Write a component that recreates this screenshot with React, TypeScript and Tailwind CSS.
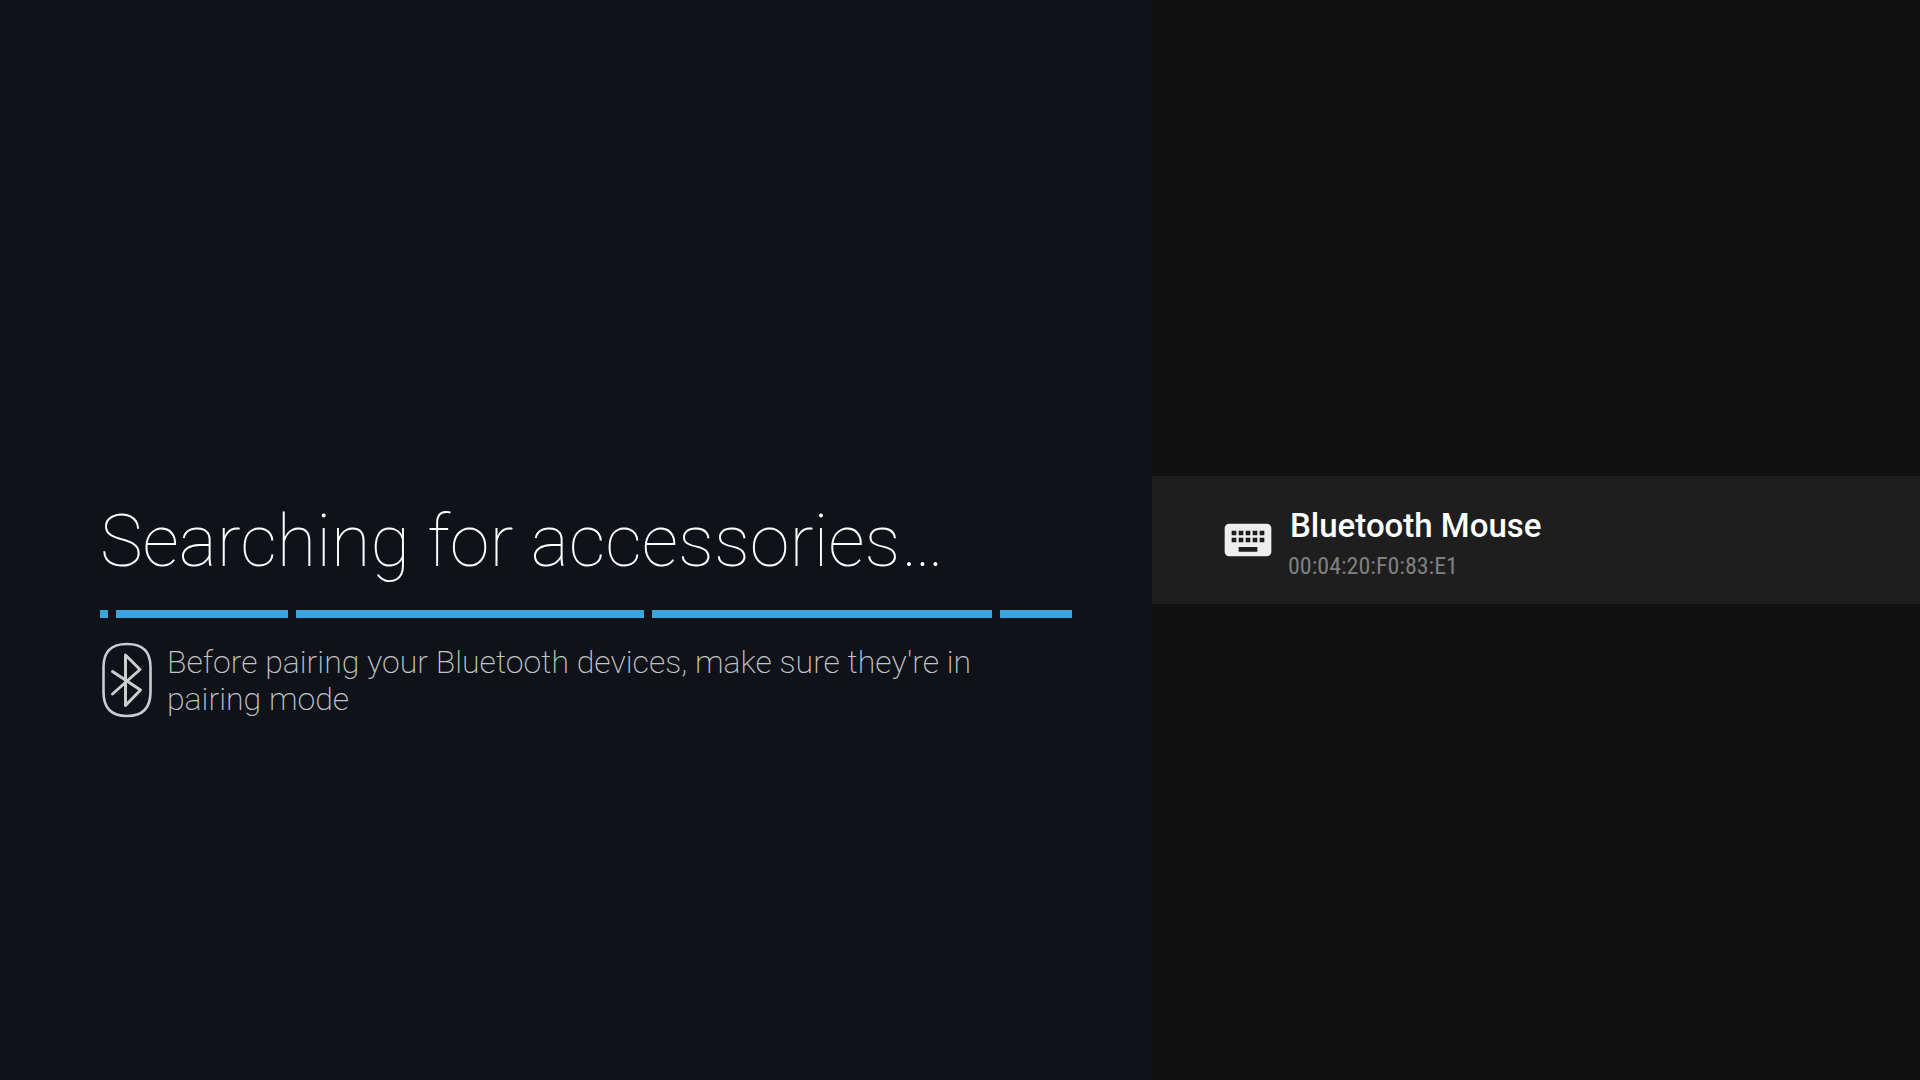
import { MdKeyboard } from "react-icons/md";

const devices = [{ name: "Bluetooth Mouse", address: "00:04:20:F0:83:E1" }];

const segments = [8, 172, 348, 340, 72];

function BluetoothIcon() {
  return (
    <svg
      className="h-20 w-14 shrink-0"
      aria-hidden="true"
      fill="none"
      stroke="#cbccce"
      viewBox="0 0 56 80"
    >
      <path
        strokeWidth="2.6"
        d="M27 4C43 4 50.5 12 50.5 27V52C50.5 68 43 76 27 76C11 76 3.5 68 3.5 52V27C3.5 12 11 4 27 4Z"
      />
      <path
        strokeWidth="3"
        strokeLinejoin="round"
        strokeLinecap="round"
        d="M12.5 31.5 40.5 50 25.5 65.5V15L40 29.5 12.5 54"
      />
    </svg>
  );
}

function SearchProgress() {
  return (
    <div
      role="progressbar"
      aria-label="Searching for accessories"
      className="flex h-2 gap-2"
    >
      {segments.map((size, index) => (
        <div
          key={index}
          className="basis-0 bg-[#3ba6dc]"
          style={{ flexGrow: size }}
        />
      ))}
    </div>
  );
}

export default function App() {
  return (
    <div className="flex min-h-screen bg-[#111111] font-['Roboto',sans-serif]">
      <main className="flex w-3/5 flex-col justify-center bg-[#0f1219] pt-[142px] pr-20 pl-25">
        <h1 className="text-[72px] leading-20 font-thin text-white">
          Searching for accessories…
        </h1>
        <div className="pt-7 pb-[22px]">
          <SearchProgress />
        </div>
        <div className="flex gap-[11px]">
          <BluetoothIcon />
          <p className="pt-1 pr-16 text-[32px] leading-[37px] font-extralight text-[#c4c5c7]">
            Before pairing your Bluetooth devices, make sure they're in pairing
            mode
          </p>
        </div>
      </main>
      <ul className="flex w-2/5 flex-col justify-center">
        {devices.map(({ name, address }) => (
          <li key={address}>
            <button
              type="button"
              className="flex w-full items-center gap-3 bg-[#1e1e1e] px-17 py-5 text-left"
            >
              <MdKeyboard className="size-14 text-[#eeeeee]" />
              <span className="flex flex-col pt-2">
                <span className="pl-0.5 text-[33px] leading-11 font-medium text-white">
                  {name}
                </span>
                <span className="font-['Roboto_Condensed','Roboto',sans-serif] text-2xl leading-9 text-[#808080]">
                  {address}
                </span>
              </span>
            </button>
          </li>
        ))}
      </ul>
    </div>
  );
}
